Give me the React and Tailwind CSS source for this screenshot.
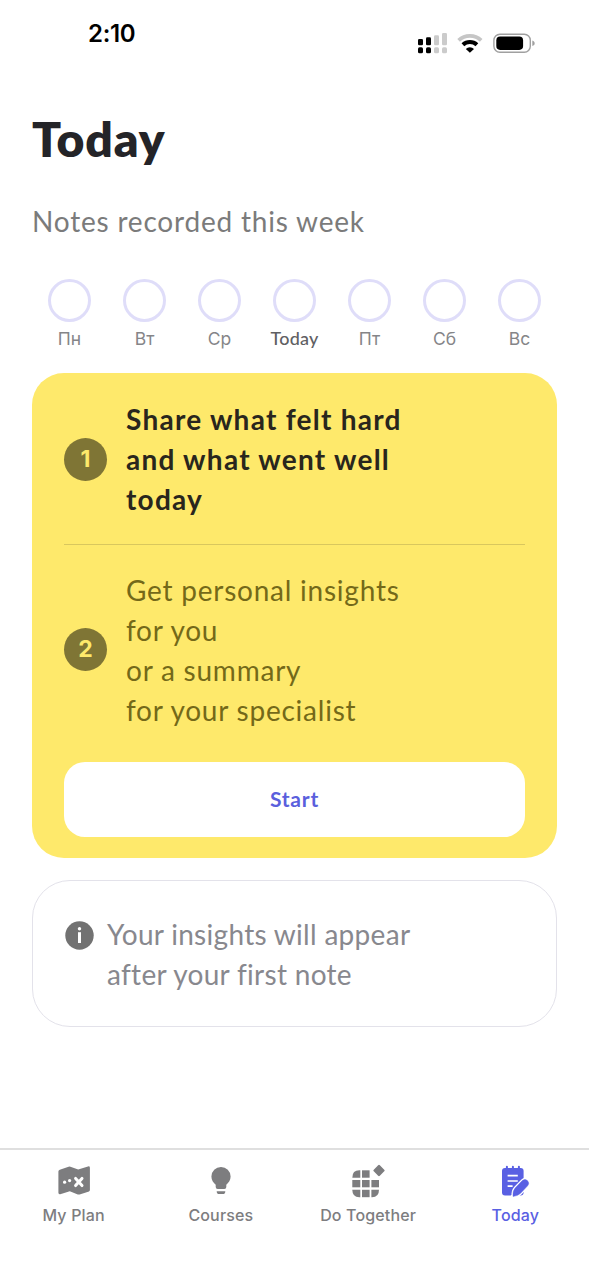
import React from 'react';

const days = ['Пн', 'Вт', 'Ср', 'Today', 'Пт', 'Сб', 'Вс'];

function SignalIcon() {
	return (
		<svg width="30" height="22" viewBox="418 32 30 22">
			<rect x="418" y="39" width="5" height="6.3" rx="1.3" />
			<rect x="426" y="37.3" width="5" height="8" rx="1.3" />
			<rect x="434" y="35.3" width="5" height="10" rx="1.3" fill="#cbcbcb" />
			<rect x="442" y="33" width="5" height="12.3" rx="1.3" fill="#cbcbcb" />
			<rect x="418" y="47.3" width="5" height="6" rx="1.6" />
			<rect x="426" y="47.3" width="5" height="6" rx="1.6" />
			<rect x="434" y="47.3" width="5" height="6" rx="1.6" fill="#cbcbcb" />
			<rect x="442" y="47.3" width="5" height="6" rx="1.6" fill="#cbcbcb" />
		</svg>
	);
}

function WifiIcon() {
	return (
		<svg width="26" height="22" viewBox="457 32 26 22" fill="none">
			<path d="M458.6 40.3 A16.6 16.6 0 0 1 481.2 40.3" stroke="#c6c6c6" strokeWidth="3.8" />
			<path d="M462.9 44.8 A10.2 10.2 0 0 1 476.9 44.8" stroke="#000" strokeWidth="4" />
			<path d="M469.9 52.8 L465.8 48.9 A5.8 5.8 0 0 1 474 48.9 Z" fill="#000" />
		</svg>
	);
}

function BatteryIcon() {
	return (
		<svg width="43" height="22" viewBox="493 32 43 22">
			<rect x="493.9" y="34.2" width="36.4" height="18" rx="6" fill="none" stroke="#a0a0a0" strokeWidth="1.4" />
			<rect x="496.3" y="36.6" width="26.8" height="13.3" rx="3.8" />
			<path d="M532.3 40.4 c3.2 1 3.2 4.6 0 5.6 Z" fill="#a0a0a0" />
		</svg>
	);
}

function MapIcon() {
	return (
		<svg width="34" height="36" viewBox="57 1164 34 36">
			<path d="M59.8 1169.8 L68.6 1166.7 Q69.5 1166.4 70.4 1166.7 L78.2 1169.6 L88 1166.4 Q89.9 1166 89.9 1167.8 V1190 Q89.9 1191 89 1191.4 L79.6 1194.4 Q78.7 1194.7 77.8 1194.4 L69.8 1191.3 L60.2 1194.2 Q58.4 1194.6 58.4 1192.8 V1171.5 Q58.4 1170.3 59.8 1169.8 Z" fill="currentColor" />
			<circle cx="64.6" cy="1182.2" r="1.6" fill="#fff" />
			<circle cx="69.6" cy="1180.6" r="1.6" fill="#fff" />
			<path d="M75.6 1178.4 L82 1185.6 M82 1178.4 L75.6 1185.6" stroke="#fff" strokeWidth="3" strokeLinecap="round" />
		</svg>
	);
}

function BulbIcon() {
	return (
		<svg width="34" height="36" viewBox="204.3 1164 34 36" fill="currentColor">
			<path d="M221.3 1167 a9.6 9.6 0 0 1 9.6 9.6 c0 3.6 -1.9 6.3 -4.3 8.1 v2.3 q0 2 -2 2 h-6.6 q-2 0 -2 -2 v-2.3 c-2.4 -1.8 -4.3 -4.5 -4.3 -8.1 a9.6 9.6 0 0 1 9.6 -9.6 Z" />
			<path d="M217 1191.2 h8.6 q0 2.8 -2.2 2.8 h-4.2 q-2.2 0 -2.2 -2.8 Z" />
		</svg>
	);
}

function GridIcon() {
	return (
		<svg width="34" height="36" viewBox="351 1164 34 36" fill="currentColor">
			<path d="M360.3 1170.3 v7.4 h-8 q0 -7.4 7 -7.4 Z" />
			<rect x="362" y="1170.3" width="7.6" height="7.4" />
			<rect x="352.3" y="1180" width="8" height="7.3" />
			<rect x="362" y="1180" width="7.6" height="7.3" />
			<rect x="371.4" y="1180" width="7.6" height="7.3" />
			<path d="M352.3 1189.8 h8 v7.4 h-1 q-7 0 -7 -7.4 Z" />
			<rect x="362" y="1189.8" width="7.6" height="7.4" />
			<path d="M371.4 1189.8 h7.6 q0 7.4 -7 7.4 h-.6 Z" />
			<rect x="374.7" y="1166.2" width="8.6" height="8.6" rx="1.2" transform="rotate(45 379 1170.5)" />
		</svg>
	);
}

function NoteIcon() {
	return (
		<svg width="34" height="36" viewBox="498.3 1164 34 36" fill="none">
			<rect x="502.3" y="1168" width="21.6" height="27.4" rx="3" fill="currentColor" />
			<path d="M507.2 1166.8 v2.6 M513.2 1166.8 v2.6 M519.2 1166.8 v2.6" stroke="currentColor" strokeWidth="2" strokeLinecap="round" />
			<path d="M507.9 1175.7 h10.2 M507.9 1181 h10.2 M507.9 1186.2 h5" stroke="#fff" strokeWidth="1.7" />
			<path d="M513.4 1196.4 q-.7 -5.2 2.1 -8.4 l7.2 -7.4 q2.6 -2.2 5.1 .1 q2.3 2.6 .1 5.1 l-7 7.4 q-2.8 2.9 -7.5 3.2 Z" fill="currentColor" stroke="#fff" strokeWidth="3" />
			<path d="M513.4 1196.4 q-.7 -5.2 2.1 -8.4 l7.2 -7.4 q2.6 -2.2 5.1 .1 q2.3 2.6 .1 5.1 l-7 7.4 q-2.8 2.9 -7.5 3.2 Z" fill="currentColor" stroke="currentColor" strokeWidth=".5" />
		</svg>
	);
}

const tabs = [
	{ label: 'My Plan', icon: MapIcon },
	{ label: 'Courses', icon: BulbIcon },
	{ label: 'Do Together', icon: GridIcon },
	{ label: 'Today', icon: NoteIcon, active: true }
];

function StepBadge({ children }) {
	return (
		<div className="w-[43px] h-[43px] shrink-0 rounded-full bg-[#7f7535] text-[#fee96b] text-[23px] font-bold font-['Inter',sans-serif] flex items-center justify-center">
			{children}
		</div>
	);
}

export default function App() {
	return (
		<div className="w-[589px] h-[1280px] bg-white flex flex-col overflow-hidden font-['Lato',sans-serif]">
			<header className="h-[112px] shrink-0 flex justify-between items-start pl-[88px] pr-[53px]">
				<span className="mt-[18px] text-[24px] leading-8 font-semibold text-black font-['Inter',sans-serif] tracking-[-0.3px]">2:10</span>
				<div className="mt-8 flex">
					<SignalIcon />
					<div className="ml-[9px]"><WifiIcon /></div>
					<div className="ml-[10px]"><BatteryIcon /></div>
				</div>
			</header>

			<main className="px-8 flex-1 flex flex-col">
				<h1 className="text-[48px] leading-[54px] font-extrabold text-[#242428] tracking-[0.9px]">Today</h1>
				<p className="mt-[34.5px] text-[28px] leading-[40px] text-[#7b7b7b] tracking-[0.8px] whitespace-nowrap">Notes recorded this week</p>

				<div className="mt-[38px] grid grid-cols-7">
					{days.map((day) => (
						<div key={day} className="flex flex-col items-center">
							<div className="w-[43px] h-[43px] rounded-full border-3 border-[#dfddf9]" />
							<span className={day === 'Today' ? "mt-[5.5px] mb-[1px] text-[18px] leading-[22px] font-medium text-[#606063] tracking-[0.2px]" : "mt-[6.5px] text-[17.5px] leading-[22px] text-[#858588] font-['Inter',sans-serif]"}>
								{day}
							</span>
						</div>
					))}
				</div>

				<section className="mt-[22.5px] h-[485.5px] rounded-[32px] bg-[#fee96b] px-8 pt-[26.5px]">
					<div className="flex items-center gap-[19px]">
						<StepBadge>1</StepBadge>
						<p className="text-[28px] leading-[40.2px] font-bold text-[#29261d] tracking-[1.25px] whitespace-nowrap">
							Share what felt hard<br />and what went well<br />today
						</p>
					</div>
					<div className="mt-[24.5px] h-px bg-[#d9c75e]" />
					<div className="mt-[24.4px] flex items-center gap-[19px]">
						<StepBadge>2</StepBadge>
						<p className="text-[28px] leading-[40.1px] text-[#746919] tracking-[0.77px] whitespace-nowrap">
							Get personal insights<br />for you<br />or a summary<br />for your specialist
						</p>
					</div>
					<button className="mt-[32px] w-full h-[75px] rounded-[21px] bg-white pb-[2px] text-[21px] font-bold text-[#5a5fdd] tracking-[0.8px]">Start</button>
				</section>

				<section className="mt-[22px] h-[147px] rounded-[38px] border border-[#e3e2ea] pl-[32px] pt-[33px] flex items-start gap-[13px]">
					<svg className="mt-[7px]" width="29" height="29" viewBox="0 0 29 29">
						<circle cx="14.5" cy="14.5" r="14.2" fill="#727272" />
						<circle cx="14.5" cy="7.8" r="1.7" fill="#fff" />
						<rect x="13" y="11.2" width="3" height="10.8" fill="#fff" />
					</svg>
					<p className="text-[28px] leading-[40.2px] text-[#88888e] tracking-[0.3px] whitespace-nowrap">
						Your insights will appear<br />after your first note
					</p>
				</section>
			</main>

			<nav className="h-[132px] shrink-0 border-t-2 border-[#dfdfdf] grid grid-cols-4 items-start font-['Inter',sans-serif]">
				{tabs.map((tab) => {
					const Icon = tab.icon;
					return (
						<div key={tab.label} className={`pt-[14px] flex flex-col items-center ${tab.active ? 'text-[#5960e3]' : 'text-[#7d7d7f]'}`}>
							<Icon />
							<span className="mt-[5px] text-[16px] leading-5 font-medium tracking-[0.15px] whitespace-nowrap">{tab.label}</span>
						</div>
					);
				})}
			</nav>
		</div>
	);
}
